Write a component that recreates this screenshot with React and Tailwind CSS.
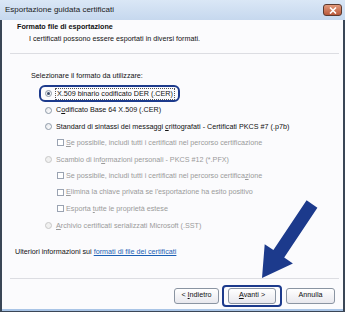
import React from "react";

const font = { fontFamily: '"Liberation Sans", Arial, sans-serif' };

function Radio({ checked, disabled }) {
  return (
    <span
      className={`flex h-[7px] w-[7px] shrink-0 items-center justify-center rounded-full border ${
        disabled ? "border-[#c8c8c8] bg-[#f0f0f0]" : "border-[#8e9aa8] bg-gradient-to-br from-[#e4e6ea] to-[#ffffff]"
      }`}
    >
      {checked && <span className="h-[3px] w-[3px] rounded-full bg-[#3b4c6b]" />}
    </span>
  );
}

function Check() {
  return <span className="h-[7px] w-[7px] shrink-0 border border-[#9aa3b2] bg-white" />;
}

function U({ children }) {
  return <span className="underline underline-offset-1">{children}</span>;
}

function RadioRow({ children, checked, disabled, highlight }) {
  return (
    <div className="flex h-[16.5px] items-start">
      <div
        className={`ml-[37px] flex h-[17px] items-center gap-[4px] rounded-[6px] border-2 pl-[4px] pr-[4px] ${
          highlight ? "border-[#1c3a8c]" : "border-transparent"
        }`}
      >
        <Radio checked={checked} disabled={disabled} />
        <span
          className={`whitespace-nowrap leading-[10px] ${disabled ? "text-[#9a9a9a]" : "text-[#111]"} ${
            highlight ? "outline-1 outline-dotted outline-[#555] px-[1px]" : ""
          }`}
        >
          {children}
        </span>
      </div>
    </div>
  );
}

function CheckRow({ children }) {
  return (
    <div className="flex h-[16.5px] items-center">
      <div className="ml-[55px] flex items-center gap-[2px]">
        <Check />
        <span className="whitespace-nowrap leading-[10px] text-[#9a9a9a]">{children}</span>
      </div>
    </div>
  );
}

function Btn({ children, w }) {
  return (
    <div
      className={`flex h-[16px] items-center justify-center rounded-[3px] border border-[#8a94a2] bg-gradient-to-b from-[#ffffff] to-[#e8e8ee] text-[#111] ${w}`}
    >
      {children}
    </div>
  );
}

export default function App() {
  return (
    <div className="flex h-[312px] w-[345px] flex-col bg-[#3a4656] px-[2px] pb-[1px] text-[7.2px]" style={font}>
      <div className="-mx-[2px] flex h-[20px] shrink-0 items-center justify-between bg-gradient-to-b from-[#dae7f6] to-[#c6d8ee] pl-[5px] pr-[3px]">
        <span className="text-[8px] text-[#1b1b1b]">Esportazione guidata certificati</span>
        <div className="flex h-[12px] w-[19px] items-center justify-center rounded-[3px] border border-[#5a3a30] bg-gradient-to-b from-[#e39a7c] to-[#b8583a]">
          <svg width="8" height="7" viewBox="0 0 8 7">
            <path d="M1 0.5 L7 6.5 M7 0.5 L1 6.5" stroke="#fff" strokeWidth="1.6" />
          </svg>
        </div>
      </div>
      <div className="flex flex-1 flex-col bg-[#fbfbfd]">
        <div className="pl-[15px] pt-[2px] font-bold leading-[10px] text-[#111]">Formato file di esportazione</div>
        <div className="mt-[2px] pl-[27px] leading-[10px] text-[#111]">
          I certificati possono essere esportati in diversi formati.
        </div>
        <div className="ml-[8px] mr-[4px] mt-[9px] h-[1px] bg-[#dcdde2]" />
        <div className="ml-[29px] mt-[17px] leading-[10px] text-[#111]">Selezionare il formato da utilizzare:</div>
        <div className="mt-[4px] flex flex-col">
          <RadioRow checked highlight>
            X.509 binario codificato DER (.CER)
          </RadioRow>
          <RadioRow>
            C<U>o</U>dificato Base 64 X.509 (.CER)
          </RadioRow>
          <RadioRow>
            Standard di sintassi dei messaggi <U>c</U>rittografati - Certificati PKCS #7 (.p7b)
          </RadioRow>
          <CheckRow>
            <U>S</U>e possibile, includi tutti i certificati nel percorso certificazione
          </CheckRow>
          <RadioRow disabled>
            Scambio di inf<U>o</U>rmazioni personali - PKCS #12 (*.PFX)
          </RadioRow>
          <CheckRow>
            Se possibile, includi tutti i certificati nel percorso certifica<U>z</U>ione
          </CheckRow>
          <CheckRow>
            <U>E</U>limina la chiave privata se l'esportazione ha esito positivo
          </CheckRow>
          <CheckRow>
            Esporta <U>t</U>utte le proprietà estese
          </CheckRow>
          <RadioRow disabled>
            <U>A</U>rchivio certificati serializzati Microsoft (.SST)
          </RadioRow>
        </div>
        <div className="ml-[13px] mt-[13px] leading-[10px] text-[#111]">
          Ulteriori informazioni sui{" "}
          <span className="text-[#1a5fb4] underline underline-offset-1">formati di file dei certificati</span>
        </div>
        <div className="ml-[8px] mr-[4px] mt-[21px] h-[1px] bg-[#dcdde2]" />
        <div className="mr-[8px] mt-[6px] flex items-center justify-end">
          <Btn w="w-[45px]">
            &lt;&nbsp;<U>I</U>ndietro
          </Btn>
          <div className="ml-[3px] rounded-[4px] border-2 border-[#1c3a8c] px-[4px] py-[1px]">
            <Btn w="w-[48px]">
              <U>A</U>vanti &gt;
            </Btn>
          </div>
          <div className="ml-[4px]">
            <Btn w="w-[49px]">Annulla</Btn>
          </div>
        </div>
        <div className="flex-1" />
        <div className="h-[2px] bg-[#a8c4e6]" />
      </div>
      <svg className="pointer-events-none absolute left-0 top-0" width="345" height="312">
        <polygon
          points="306.6,200.3 317.4,207.7 284.2,257.5 292.9,263.4 262,278 264.7,244.2 273.4,250.1"
          fill="#1c3a8c"
        />
      </svg>
    </div>
  );
}
